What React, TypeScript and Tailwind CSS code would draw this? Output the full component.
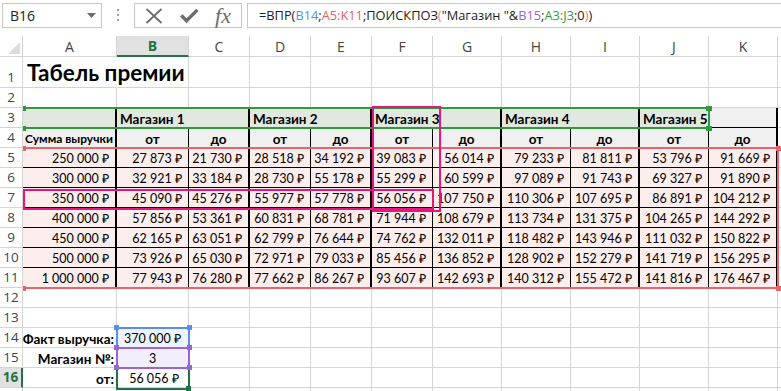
import React from "react";

type Line = "grid" | "thin" | "thick" | "clear";

const RIGHT: Record<Line, string> = {
  grid: "border-r border-r-[#d4d4d4]",
  thin: "border-r border-r-black",
  thick: "border-r-2 border-r-black",
  clear: "border-r border-r-transparent",
};

const BOTTOM: Record<Line, string> = {
  grid: "border-b border-b-[#d4d4d4]",
  thin: "border-b border-b-black",
  thick: "border-b-2 border-b-black",
  clear: "border-b border-b-transparent",
};

const COLS = [
  { id: "A", w: "w-[94px]" },
  { id: "B", w: "w-[72px]" },
  { id: "C", w: "w-[61px]" },
  { id: "D", w: "w-[61px]" },
  { id: "E", w: "w-[61px]" },
  { id: "F", w: "w-[61px]" },
  { id: "G", w: "w-[69px]" },
  { id: "H", w: "w-[69px]" },
  { id: "I", w: "w-[69px]" },
  { id: "J", w: "w-[69px]" },
  { id: "K", w: "w-[69px]" },
];

// borders between store columns: thick between stores, thin between "от" and "до"
const TABLE_RIGHT: Line[] = ["thick", "thin", "thick", "thin", "thick", "thin", "thick", "thin", "thick", "thin", "thick"];

const REVENUE = ["250 000 ₽", "300 000 ₽", "350 000 ₽", "400 000 ₽", "450 000 ₽", "500 000 ₽", "1 000 000 ₽"];

const BONUS = [
  ["27 873 ₽", "21 730 ₽", "28 518 ₽", "34 192 ₽", "39 083 ₽", "56 014 ₽", "79 233 ₽", "81 811 ₽", "53 796 ₽", "91 669 ₽"],
  ["32 921 ₽", "33 184 ₽", "28 730 ₽", "55 178 ₽", "55 299 ₽", "60 599 ₽", "97 089 ₽", "91 743 ₽", "69 327 ₽", "91 890 ₽"],
  ["45 090 ₽", "45 276 ₽", "55 977 ₽", "57 778 ₽", "56 056 ₽", "107 750 ₽", "110 306 ₽", "107 695 ₽", "86 891 ₽", "104 212 ₽"],
  ["57 856 ₽", "53 361 ₽", "60 831 ₽", "68 781 ₽", "71 944 ₽", "108 679 ₽", "113 734 ₽", "131 375 ₽", "104 265 ₽", "144 292 ₽"],
  ["62 165 ₽", "63 051 ₽", "62 799 ₽", "76 644 ₽", "74 762 ₽", "132 011 ₽", "118 482 ₽", "143 946 ₽", "111 032 ₽", "150 822 ₽"],
  ["73 926 ₽", "65 030 ₽", "72 971 ₽", "79 033 ₽", "85 456 ₽", "136 852 ₽", "128 902 ₽", "152 279 ₽", "141 719 ₽", "156 295 ₽"],
  ["77 943 ₽", "76 280 ₽", "77 662 ₽", "86 267 ₽", "93 607 ₽", "142 693 ₽", "140 312 ₽", "155 472 ₽", "141 816 ₽", "176 467 ₽"],
];

const STORES = [
  { name: "Магазин 1", w: "w-[133px]" },
  { name: "Магазин 2", w: "w-[122px]" },
  { name: "Магазин 3", w: "w-[130px]" },
  { name: "Магазин 4", w: "w-[138px]" },
];

function Cell({
  w,
  r = "grid",
  b = "grid",
  className = "",
  children,
}: {
  w: string;
  r?: Line;
  b?: Line;
  className?: string;
  children?: React.ReactNode;
}) {
  return (
    <div className={`flex shrink-0 items-end whitespace-nowrap ${w} ${RIGHT[r]} ${BOTTOM[b]} ${className}`}>
      {children}
    </div>
  );
}

function Filler() {
  return <div className="flex-1 border-b border-b-[#d4d4d4]" />;
}

function Row({
  n,
  tall = false,
  active = false,
  children,
}: {
  n?: number;
  tall?: boolean;
  active?: boolean;
  children?: React.ReactNode;
}) {
  return (
    <div className={`flex ${tall ? "h-[31px]" : "h-[20px]"} shrink-0`}>
      <div
        className={`flex w-[23px] shrink-0 items-end justify-center pb-[2px] text-[13.5px] leading-[16px] border-b border-b-[#d4d4d4] ${
          active
            ? "border-r-2 border-r-[#217346] bg-[#e1e1e1] font-bold text-[#217346]"
            : "border-r border-r-[#d4d4d4] text-[#444]"
        }`}
      >
        {n}
      </div>
      <div className="flex flex-1 font-['Lato',sans-serif] text-[12.5px] leading-[16px] text-black">{children}</div>
    </div>
  );
}

function EmptyCells({ from = 0 }: { from?: number }) {
  return (
    <>
      {COLS.slice(from).map((c) => (
        <Cell key={c.id} w={c.w} />
      ))}
      <Filler />
    </>
  );
}

function FormulaBar() {
  return (
    <div className="flex h-[36px] items-start pt-[3px] text-[#222]">
      <div className="ml-[2px] flex h-[25px] w-[100px] items-center justify-between border border-[#c6c6c6] pl-[7px] pr-[5px] text-[14px]">
        <span>B16</span>
        <svg width="9" height="5" viewBox="0 0 9 5">
          <path d="M0 0 L9 0 L4.5 5 Z" fill="#6b6b6b" />
        </svg>
      </div>
      <div className="flex w-[32px] flex-col items-center gap-[3px] pt-[6px]">
        <span className="h-[2px] w-[2px] bg-[#a6a6a6]" />
        <span className="h-[2px] w-[2px] bg-[#a6a6a6]" />
        <span className="h-[2px] w-[2px] bg-[#a6a6a6]" />
      </div>
      <div className="flex h-[25px] w-[108px] items-center justify-around border border-[#c6c6c6] px-[2px]">
        <svg width="18" height="16" viewBox="0 0 18 16">
          <path d="M1.5 1 L16.5 15 M16.5 1 L1.5 15" stroke="#6b6b6b" strokeWidth="1.8" fill="none" />
        </svg>
        <svg width="20" height="16" viewBox="0 0 20 16">
          <path d="M1 8.5 L3.5 6.3 L7.5 10.3 L17.3 0.8 L19.6 3 L7.5 15.2 Z" fill="#6b6b6b" />
        </svg>
        <span className="font-['Liberation_Serif',serif] text-[22px] italic leading-none text-[#6b6b6b]">fx</span>
      </div>
      <div className="ml-[5px] flex h-[25px] flex-1 items-center whitespace-pre border border-r-0 border-[#c6c6c6] pl-[11px] text-[12.8px]">
        <span>=ВПР(</span>
        <span className="text-[#5b8fe6]">B14</span>
        <span>;</span>
        <span className="text-[#e8605f]">A5:K11</span>
        <span>;ПОИСКПОЗ</span>
        <span className="text-[#e8807d]">(</span>
        <span>"Магазин "&amp;</span>
        <span className="text-[#9b63d6]">B15</span>
        <span>;</span>
        <span className="text-[#2f9e3c]">A3:J3</span>
        <span>;0</span>
        <span className="text-[#e8807d]">)</span>
        <span>)</span>
      </div>
    </div>
  );
}

function ColumnHeader() {
  return (
    <div className="flex h-[21px] shrink-0 text-[14px] text-[#444]">
      <div className="flex w-[23px] shrink-0 items-end justify-end border-r border-b border-[#d4d4d4] pb-[2px] pr-[2px]">
        <svg width="12" height="12" viewBox="0 0 12 12">
          <path d="M12 0 L12 12 L0 12 Z" fill="#dcdcdc" />
        </svg>
      </div>
      {COLS.map((c) =>
        c.id === "B" ? (
          <div
            key={c.id}
            className={`flex ${c.w} shrink-0 items-center justify-center border-r border-r-[#d4d4d4] border-b-2 border-b-[#217346] bg-[#e1e1e1] font-bold text-[#217346]`}
          >
            {c.id}
          </div>
        ) : (
          <div key={c.id} className={`flex ${c.w} shrink-0 items-center justify-center border-r border-b border-[#d4d4d4]`}>
            {c.id}
          </div>
        )
      )}
      <div className="flex-1 border-b border-[#d4d4d4]" />
    </div>
  );
}

function Sheet() {
  return (
    <div className="flex flex-col">
      <ColumnHeader />

      <Row n={1} tall>
        <Cell w="w-[94px]" r="clear" className="relative z-10 pb-[1px] pl-[4px]">
          <span className="text-[22.5px] font-bold leading-[26px]">Табель премии</span>
        </Cell>
        <EmptyCells from={1} />
      </Row>

      <Row n={2}>
        <EmptyCells />
      </Row>

      <Row n={3}>
        <Cell w="w-[94px]" r="thick" b="thin" className="bg-[#e1e8df]" />
        {STORES.map((s) => (
          <Cell key={s.name} w={s.w} r="thick" b="thin" className="bg-[#e1e8df] pl-[3px] text-[13.5px] font-bold">
            {s.name}
          </Cell>
        ))}
        <Cell
          w="w-[138px]"
          r="thick"
          b="thin"
          className="bg-[linear-gradient(to_right,#e1e8df_69px,#f0f0f0_69px)] pl-[3px] text-[13.5px] font-bold"
        >
          Магазин 5
        </Cell>
        <Filler />
      </Row>

      <Row n={4}>
        <Cell w="w-[94px]" r="thick" b="thin" className="justify-center bg-[#f0f0f0] text-[12px] font-bold">
          Сумма выручки
        </Cell>
        {COLS.slice(1).map((c, i) => (
          <Cell
            key={c.id}
            w={c.w}
            r={TABLE_RIGHT[i + 1]}
            b="thin"
            className="justify-center bg-[#f0f0f0] text-[13.5px] font-bold"
          >
            {i % 2 === 0 ? "от" : "до"}
          </Cell>
        ))}
        <Filler />
      </Row>

      {BONUS.map((vals, ri) => (
        <Row key={ri} n={ri + 5}>
          <Cell w="w-[94px]" r="thick" b="thin" className="justify-end bg-[#fdeeee] pr-[6px]">
            {REVENUE[ri]}
          </Cell>
          {vals.map((v, i) => (
            <Cell
              key={i}
              w={COLS[i + 1].w}
              r={TABLE_RIGHT[i + 1]}
              b="thin"
              className="justify-end bg-[#fdeeee] pr-[6px]"
            >
              {v}
            </Cell>
          ))}
          <Filler />
        </Row>
      ))}

      <Row n={12}>
        <EmptyCells />
      </Row>
      <Row n={13}>
        <EmptyCells />
      </Row>

      <Row n={14}>
        <Cell w="w-[94px]" className="justify-end pr-[2px] text-[13.5px] font-bold">
          Факт выручка:
        </Cell>
        <Cell w="w-[72px]" className="justify-center bg-[#eef3fc]">
          370 000 ₽
        </Cell>
        <EmptyCells from={2} />
      </Row>
      <Row n={15}>
        <Cell w="w-[94px]" className="justify-end pr-[2px] text-[13.5px] font-bold">
          Магазин №:
        </Cell>
        <Cell w="w-[72px]" className="justify-center bg-[#f2eefa]">
          3
        </Cell>
        <EmptyCells from={2} />
      </Row>
      <Row n={16} active>
        <Cell w="w-[94px]" className="justify-end pr-[2px] text-[13.5px] font-bold">
          от:
        </Cell>
        <Cell w="w-[72px]" className="justify-center pl-[3px]">
          56 056 ₽
        </Cell>
        <EmptyCells from={2} />
      </Row>
      <Row>
        <EmptyCells />
      </Row>
    </div>
  );
}

function Overlays() {
  return (
    <div className="pointer-events-none absolute inset-0 z-20">
      {/* A3:J3 reference */}
      <div className="absolute left-[23px] top-[107px] h-[22px] w-[687px] border-y-2 border-r-2 border-[#2e9a3a]" />
      <div className="absolute left-[23px] top-[106px] h-[5px] w-[3px] bg-[#2e9a3a]" />
      <div className="absolute left-[23px] top-[126px] h-[5px] w-[3px] bg-[#2e9a3a]" />
      <div className="absolute left-[706px] top-[106px] h-[5px] w-[6px] bg-[#2e9a3a]" />
      <div className="absolute left-[706px] top-[126px] h-[5px] w-[6px] bg-[#2e9a3a]" />

      {/* A5:K11 reference */}
      <div className="absolute left-[23px] top-[147px] h-[142px] w-[756px] border-y-2 border-r-2 border-[#e8636a]" />
      <div className="absolute left-[23px] top-[146px] h-[5px] w-[3px] bg-[#e8636a]" />
      <div className="absolute left-[23px] top-[286px] h-[5px] w-[3px] bg-[#e8636a]" />
      <div className="absolute left-[776px] top-[146px] h-[5px] w-[5px] bg-[#e8636a]" />
      <div className="absolute left-[776px] top-[286px] h-[5px] w-[5px] bg-[#e8636a]" />

      {/* lookup trace */}
      <div className="absolute left-[372px] top-[106px] h-[106px] w-[69px] border-2 border-[#e5177f]" />
      <div className="absolute left-[23px] top-[189px] h-[21px] w-[411px] border-2 border-[#e5177f]" />

      {/* B16 selection */}
      <div className="absolute left-[116px] top-[367px] h-[23px] w-[74px] border-2 border-[#217346]" />
      <div className="absolute left-[186px] top-[386px] h-[5px] w-[5px] bg-[#217346]" />

      {/* B14 reference */}
      <div className="absolute left-[116px] top-[327px] h-[22px] w-[74px] border-2 border-[#5b8def]" />
      <div className="absolute left-[114px] top-[325px] h-[5px] w-[5px] bg-[#5b8def]" />
      <div className="absolute left-[187px] top-[325px] h-[5px] w-[5px] bg-[#5b8def]" />

      {/* B15 reference */}
      <div className="absolute left-[116px] top-[347px] h-[22px] w-[74px] border-2 border-[#9a64d6]" />
      <div className="absolute left-[114px] top-[345px] h-[5px] w-[5px] bg-[#9a64d6]" />
      <div className="absolute left-[187px] top-[345px] h-[5px] w-[5px] bg-[#9a64d6]" />
      <div className="absolute left-[114px] top-[365px] h-[5px] w-[5px] bg-[#9a64d6]" />
      <div className="absolute left-[187px] top-[365px] h-[5px] w-[5px] bg-[#9a64d6]" />
    </div>
  );
}

export default function App() {
  return (
    <div className="relative h-[391px] w-[781px] overflow-hidden bg-white font-['Open_Sans',sans-serif]">
      <FormulaBar />
      <Sheet />
      <Overlays />
    </div>
  );
}
